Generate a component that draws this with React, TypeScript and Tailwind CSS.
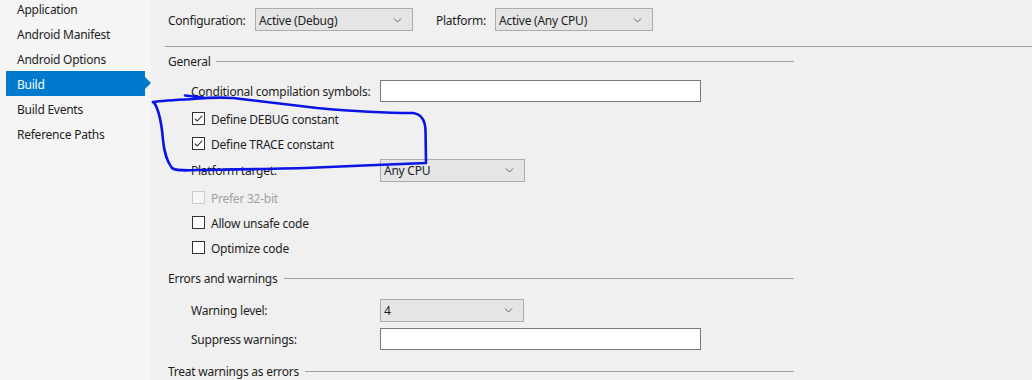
import React from 'react';

const FONT = { fontFamily: '"Segoe UI", "Noto Sans", "Open Sans", sans-serif' };

const NAV = ['Application', 'Android Manifest', 'Android Options', 'Build', 'Build Events', 'Reference Paths'];

function Chevron() {
  return (
    <svg width="9" height="6" viewBox="0 0 9 6" className="shrink-0">
      <path d="M1 1.5 L4.5 5 L8 1.5" fill="none" stroke="#606060" strokeWidth="1" />
    </svg>
  );
}

function Select({ value, width }: { value: string; width: string }) {
  return (
    <div className={`${width} h-[23px] flex items-center justify-between pl-[3px] pr-[10px] bg-[#e5e5e5] border border-[#acacac] text-[#1e1e1e]`}>
      <span className="pt-[2px]">{value}</span>
      <Chevron />
    </div>
  );
}

function Check({ label, checked = false, disabled = false }: { label: string; checked?: boolean; disabled?: boolean }) {
  return (
    <div className="h-[25px] flex items-center pl-[27px]">
      <div
        className={`w-[13px] h-[13px] border flex items-center justify-center ${
          disabled ? 'border-[#cccccc] bg-[#f7f7f7]' : 'border-[#333333] bg-white'
        }`}
      >
        {checked && (
          <svg width="11" height="11" viewBox="0 0 11 11">
            <path d="M1.8 5.6 L4.2 8 L9.2 2.6" fill="none" stroke="#333333" strokeWidth="1.1" />
          </svg>
        )}
      </div>
      <span className={`ml-[6px] pt-[2px] ${disabled ? 'text-[#a2a2a2]' : 'text-[#1e1e1e]'}`}>{label}</span>
    </div>
  );
}

function Heading({ title }: { title: string }) {
  return (
    <div className="h-[28px] flex items-center pl-[3px] w-[629px]">
      <span className="pt-[2px] text-[#1e1e1e]">{title}</span>
      <div className="flex-1 ml-[6px] border-t border-[#a0a0a0]" />
    </div>
  );
}

function FieldRow({ label, children, className = '' }: { label: string; children: React.ReactNode; className?: string }) {
  return (
    <div className={`h-[22px] flex items-center pl-[26px] ${className}`}>
      <span className="w-[189px] pt-[2px] text-[#1e1e1e]">{label}</span>
      {children}
    </div>
  );
}

export default function App() {
  return (
    <div
      className="relative w-[1032px] h-[380px] overflow-hidden flex text-[12px] leading-none tracking-[-0.25px] bg-[#f0f0f0]"
      style={FONT}
    >
      {/* side nav */}
      <div className="w-[151px] shrink-0 bg-[#f5f5f5]">
        <div className="-mt-[4px]">
          {NAV.map((item) => (
            <div key={item} className="relative h-[25px] flex items-center">
              {item === 'Build' ? (
                <div className="ml-[6px] w-[139px] h-[25px] bg-[#007acc] flex items-center pl-[11px] pt-[2px] text-white relative">
                  Build
                  <div className="absolute right-[-6px] top-[6px] w-0 h-0 border-y-[6px] border-y-transparent border-l-[6px] border-l-[#007acc]" />
                </div>
              ) : (
                <span className="pl-[17px] pt-[2px] text-[#1e1e1e]">{item}</span>
              )}
            </div>
          ))}
        </div>
      </div>

      {/* page */}
      <div className="flex-1 pl-[14px]">
        <div className="h-[46px] flex items-start pt-[8px] pl-[3px]">
          <div className="h-[23px] flex items-center">
            <span className="w-[87px] pt-[2px] text-[#1e1e1e]">Configuration:</span>
            <Select value="Active (Debug)" width="w-[158px]" />
            <span className="ml-[23px] w-[59px] pt-[2px] text-[#1e1e1e]">Platform:</span>
            <Select value="Active (Any CPU)" width="w-[158px]" />
          </div>
        </div>
        <div className="border-t border-[#a0a0a0]" />

        <Heading title="General" />
        <FieldRow label="Conditional compilation symbols:" className="mt-[5px]">
          <div className="w-[321px] h-[22px] bg-white border border-[#7a7a7a]" />
        </FieldRow>
        <div className="mt-[4px]">
          <Check label="Define DEBUG constant" checked />
          <Check label="Define TRACE constant" checked />
        </div>
        <FieldRow label="Platform target:" className="mt-[3px]">
          <Select value="Any CPU" width="w-[145px]" />
        </FieldRow>
        <div className="mt-[4px]">
          <Check label="Prefer 32-bit" disabled />
          <Check label="Allow unsafe code" />
          <Check label="Optimize code" />
        </div>

        <div className="mt-[4px]">
          <Heading title="Errors and warnings" />
        </div>
        <FieldRow label="Warning level:" className="mt-[7px]">
          <Select value="4" width="w-[144px]" />
        </FieldRow>
        <FieldRow label="Suppress warnings:" className="mt-[7px]">
          <div className="w-[321px] h-[22px] bg-white border border-[#7a7a7a]" />
        </FieldRow>
        <div className="mt-[7px]">
          <Heading title="Treat warnings as errors" />
        </div>
      </div>

      {/* hand-drawn annotation */}
      <svg className="absolute left-0 top-0 pointer-events-none" width="1032" height="380">
        <path
          d="M185 95.5 L203 97.5 M153 102 C160 101 175 100 193 99 C205 98 215 97 233 98 C260 101 290 105 317 108 C350 111 385 113 413 113 C421 114 425 120 425.5 130 L426 163 C400 164 350 166 317 167.5 C280 169 230 169.5 200 170 C185 170.5 175 171 172 168 C168 163 164 152 163 140 C162 128 160 113 155 104 L153 102"
          fill="none"
          stroke="#0a14e6"
          strokeWidth="2.6"
          strokeLinecap="round"
          strokeLinejoin="round"
        />
      </svg>
    </div>
  );
}
